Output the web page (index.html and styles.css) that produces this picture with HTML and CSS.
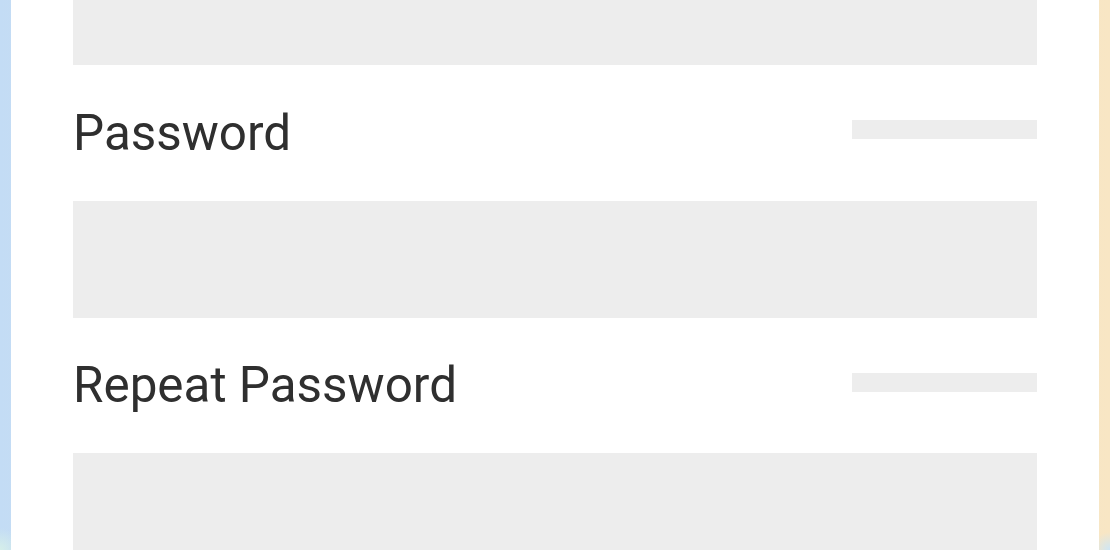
FILE: index.html
```html
<!DOCTYPE html>
<html lang="en">
<head>
  <meta charset="UTF-8">
  <title>Sign up</title>
  <link rel="stylesheet" href="styles.css">
</head>
<body>
  <div class="card">
    <form class="signup-form">
      <div class="field-input"></div>

      <div class="field-label">
        <label>Password</label>
        <span class="hint-bar"></span>
      </div>
      <div class="field-input"></div>

      <div class="field-label">
        <label>Repeat Password</label>
        <span class="hint-bar"></span>
      </div>
      <div class="field-input"></div>
    </form>
  </div>
</body>
</html>
```

FILE: styles.css
```css
html, body {
  height: 100%;
}

body {
  margin: 0;
  overflow: hidden;
  font-family: Roboto, "Noto Sans", sans-serif;
  background:
    radial-gradient(circle at 0 100%, #d6efe9 0, rgba(214, 239, 233, 0) 22px),
    radial-gradient(circle at 100% 100%, #cde6f6 0, rgba(205, 230, 246, 0) 18px),
    linear-gradient(to right, #c3dcf5, #f8e6c4);
}

.card {
  display: flow-root;
  overflow: hidden;
  margin: 0 11px;
  height: 100%;
  background: #fff;
  padding: 0 62px;
}

.signup-form {
  display: flex;
  flex-direction: column;
  margin-top: -52px;
}

.field-input {
  height: 117px;
  background: #ededed;
  flex-shrink: 0;
}

.field-label {
  height: 135.5px;
  flex-shrink: 0;
  display: flex;
  align-items: center;
  justify-content: space-between;
}

.field-label label {
  font-size: 49.4px;
  color: #2f2f2f;
}

.hint-bar {
  width: 185px;
  height: 19px;
  background: #ededed;
  margin-bottom: 6px;
}
```
